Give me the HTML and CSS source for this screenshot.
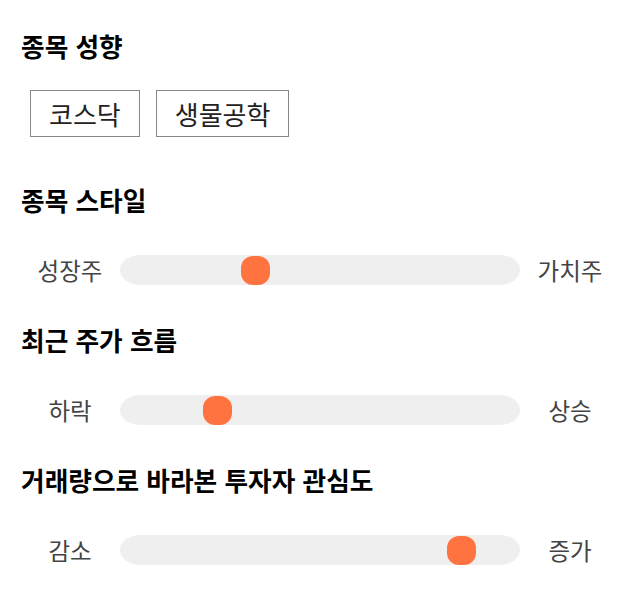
FILE: index.html
```html
<!DOCTYPE html>
<html lang="ko">
<head>
<meta charset="utf-8">
<link rel="stylesheet" href="styles.css">
</head>
<body>
<main class="page">
  <section class="sec sec-tags">
    <h2 class="title">종목 성향</h2>
    <div class="tags">
      <span class="tag">코스닥</span>
      <span class="tag">생물공학</span>
    </div>
  </section>
  <section class="sec">
    <h2 class="title">종목 스타일</h2>
    <div class="slider">
      <span class="lab">성장주</span>
      <div class="track"><span class="thumb" style="left: calc(33.9% - 14.5px)"></span></div>
      <span class="lab">가치주</span>
    </div>
  </section>
  <section class="sec">
    <h2 class="title">최근 주가 흐름</h2>
    <div class="slider">
      <span class="lab">하락</span>
      <div class="track"><span class="thumb" style="left: calc(24.25% - 14.5px)"></span></div>
      <span class="lab">상승</span>
    </div>
  </section>
  <section class="sec">
    <h2 class="title">거래량으로 바라본 투자자 관심도</h2>
    <div class="slider">
      <span class="lab">감소</span>
      <div class="track"><span class="thumb" style="left: calc(85.25% - 14.5px)"></span></div>
      <span class="lab">증가</span>
    </div>
  </section>
</main>
</body>
</html>
```

FILE: styles.css
```css
html, body {
  margin: 0;
  padding: 0;
  background: #ffffff;
}
body {
  font-family: "Noto Sans CJK KR", "Noto Sans", sans-serif;
  color: #000;
}
.page {
  padding: 30px 20px 0 20px;
  display: flex;
  flex-direction: column;
}
.sec {
  display: flex;
  flex-direction: column;
  margin-bottom: 39px;
}
.sec-tags {
  margin-bottom: 47px;
}
.title {
  margin: 0 0 0 1px;
  font-size: 25.7px;
  line-height: 32px;
  font-weight: 700;
  color: #000;
}
.tags {
  display: flex;
  gap: 16px;
  margin-top: 28px;
  padding-left: 10px;
}
.tag {
  border: 1px solid #888;
  height: 45px;
  padding: 0 18px;
  display: flex;
  align-items: center;
  font-size: 26px;
  color: #222;
}
.slider {
  margin-top: 39px;
  display: grid;
  grid-template-columns: 100px 400px 100px;
  align-items: center;
  height: 30px;
}
.lab {
  text-align: center;
  font-size: 23.5px;
  color: #444;
  line-height: 30px;
}
.track {
  position: relative;
  height: 30px;
  background: #efefef;
  border-radius: 20px / 15px;
}
.thumb {
  position: absolute;
  top: 0.5px;
  width: 29px;
  height: 29px;
  border-radius: 12px;
  background: #ff7340;
}
```
